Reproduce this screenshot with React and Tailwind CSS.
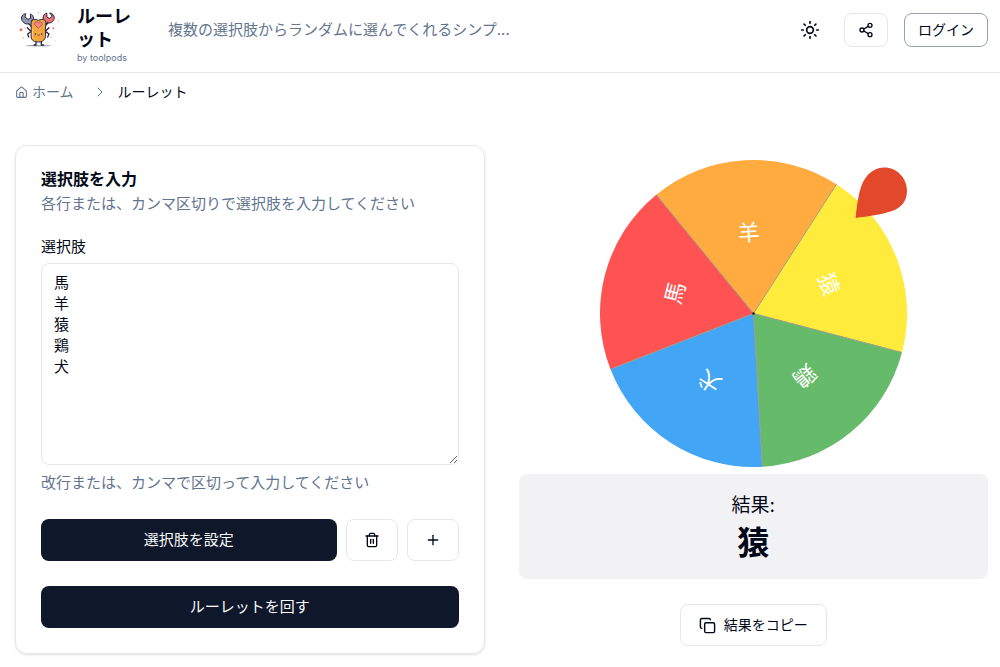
import { useState } from 'react'
import { ChevronRight, Copy, House, Plus, Share2, Sun, Trash2 } from 'lucide-react'

const SIZE = 307
const CENTER = SIZE / 2
const START_ANGLE = 248.7
const LABEL_RADIUS = 81
const COLORS = ['#ff5252', '#ffab40', '#ffeb3b', '#66bb6a', '#42a5f5']

function toItems(text) {
  return text.split(/[\n,、]/).map((s) => s.trim()).filter(Boolean)
}

// angles are in degrees, clockwise from 12 o'clock
function point(angle, radius) {
  const rad = (angle * Math.PI) / 180
  return [CENTER + radius * Math.sin(rad), CENTER - radius * Math.cos(rad)]
}

function Mascot() {
  return (
    <svg viewBox="0 0 180 150" className="mb-3 w-[60px] h-[50px] shrink-0" aria-hidden="true">
      <ellipse cx="85" cy="122" rx="38" ry="2.5" fill="#a9adbd" />
      <g stroke="#2b2944" strokeWidth="4" fill="none" strokeLinejoin="round" strokeLinecap="round">
        <path d="M78 106v14h-6M94 106v14h7" />
        <path d="M62 78l-10-10M62 80l-9 7 3 9M107 78l10-10M107 80l10 7-4 9" />
        <path d="M66 64l-8-8M104 62l8-8" strokeWidth="7" />
        <path d="M46 26c-9 1-14 11-10 20 4 9 14 13 21 10l11 13 9-9-9-12c5-8 2-19-7-21l1 13-8 3-8-6z" fill="#9299ae" strokeWidth="3" />
        <path d="M120 24c9 1 15 10 12 19-3 9-13 13-21 10l-10 13-10-8 10-12c-4-9 0-20 9-22l1 13 8 3 7-6z" fill="#ee7276" strokeWidth="3" />
        <path d="M66 46c6-5 12-3 19 0 7-3 15-5 21 1 4 8 0 17 0 25 0 12 2 20-1 28-4 9-12 11-20 11s-18-2-21-12c-2-7 0-17 0-26 0-9-3-19 2-27z" fill="#f3a63c" strokeWidth="3" />
      </g>
      <path d="M68 71c0 12-2 24 2 30" stroke="#ffc95c" strokeWidth="4" fill="none" />
      <path d="M85 70l-11-11c-3-7 4-12 11-6 7-6 14 0 11 6z" fill="#f58486" stroke="#98424f" strokeWidth="2" />
      <g fill="#35283d">
        <circle cx="76" cy="87" r="2.5" />
        <circle cx="95" cy="87" r="2.5" />
      </g>
      <path d="M82 89q4 5 8 0" stroke="#35283d" strokeWidth="2" fill="none" />
      <g fill="#ee7468">
        <circle cx="73" cy="93" r="2.5" />
        <circle cx="98" cy="93" r="2.5" />
        <circle cx="33" cy="74" r="4.5" />
        <circle cx="130" cy="70" r="3" />
      </g>
      <g fill="#f2bd74">
        <circle cx="85" cy="23" r="2.5" />
        <circle cx="145" cy="48" r="2.5" />
        <circle cx="40" cy="99" r="2.5" />
        <circle cx="124" cy="97" r="2.5" />
        <circle cx="45" cy="69" r="2" />
        <circle cx="137" cy="107" r="1.5" />
      </g>
    </svg>
  )
}

function Wheel({ items, turn }) {
  const step = 360 / items.length
  return (
    <svg viewBox={`0 0 ${SIZE} ${SIZE}`} className="w-[307px] max-w-full" role="img" aria-label="ルーレット">
      {items.map((item, i) => {
        const from = START_ANGLE + turn + i * step
        const [x1, y1] = point(from, CENTER)
        const [x2, y2] = point(from + step, CENTER)
        const mid = from + step / 2
        const [tx, ty] = point(mid, LABEL_RADIUS)
        return (
          <g key={i}>
            <path
              d={`M${CENTER} ${CENTER}L${x1} ${y1}A${CENTER} ${CENTER} 0 ${step > 180 ? 1 : 0} 1 ${x2} ${y2}Z`}
              fill={COLORS[i % COLORS.length]}
            />
            <text
              transform={`translate(${tx} ${ty}) rotate(${mid})`}
              textAnchor="middle"
              dominantBaseline="central"
              fill="#fff"
              className="text-[22px]"
            >
              {item}
            </text>
          </g>
        )
      })}
      {items.map((_, i) => {
        const [x, y] = point(START_ANGLE + turn + i * step, CENTER)
        return <path key={i} d={`M${CENTER} ${CENTER}L${x} ${y}`} stroke="#9c9c8c" strokeWidth="1" />
      })}
      <circle cx={CENTER} cy={CENTER} r="1.2" fill="#111" />
      <path
        d="M255.500 58C257 46 258 33 263 22C269 11 277 7.500 284 7.500C297 7.500 307 18 307 31C307 41 301 48 292 51C281 55 268 56 255.500 58Z"
        fill="#e2492b"
      />
    </svg>
  )
}

const outlineButton = 'flex items-center justify-center rounded-lg border border-gray-200 bg-white'
const primaryButton = 'h-[42px] rounded-lg bg-[#0f172a] text-[15px] text-slate-50'

export default function App() {
  const [text, setText] = useState('馬\n羊\n猿\n鶏\n犬')
  const [items, setItems] = useState(() => toItems(text))
  const [turn, setTurn] = useState(0)
  const [result, setResult] = useState('猿')

  function applyItems() {
    const next = toItems(text)
    if (next.length) setItems(next)
  }

  function spin() {
    const step = 360 / items.length
    const index = Math.floor(Math.random() * items.length)
    // the pointer sits at 45 degrees
    setTurn(45 - START_ANGLE - (index + 0.5) * step)
    setResult(items[index])
  }

  return (
    <div className="bg-white text-[15px] leading-[22px] text-[#020817] font-['Inter','Noto_Sans_CJK_JP',sans-serif]" lang="ja">
      <header className="flex h-[73px] items-center border-b border-gray-200 pl-[10px] pr-3">
        <a href="#" className="flex shrink-0 items-center gap-[7px]">
          <Mascot />
          <span className="block w-[60px] pb-[2px]">
            <span className="block text-[18px] font-bold leading-[23px]">ルーレット</span>
            <span className="block text-[9px] leading-[14px] text-slate-500">by toolpods</span>
          </span>
        </a>
        <p className="ml-[31px] mr-4 mb-3 text-slate-500">複数の選択肢からランダムに選んでくれるシンプ...</p>
        <div className="mb-3 ml-auto flex shrink-0 items-center gap-4">
          <button type="button" aria-label="テーマ切替" className="flex h-[34px] w-9 items-center justify-center">
            <Sun size={20} strokeWidth={2} />
          </button>
          <button type="button" aria-label="共有" className={`${outlineButton} h-[34px] w-11`}>
            <Share2 size={16} />
          </button>
          <button type="button" className="h-[34px] w-[84px] rounded-lg border border-gray-400 bg-white text-sm">
            ログイン
          </button>
        </div>
      </header>

      <nav aria-label="パンくず" className="flex items-center px-[15px] pt-2 text-sm leading-[22px]">
        <a href="#" className="flex items-center gap-1 text-slate-500">
          <House size={13} />
          ホーム
        </a>
        <ChevronRight size={16} strokeWidth={1.5} className="ml-[18px] mr-[10px] text-slate-500" />
        <span>ルーレット</span>
      </nav>

      <main className="grid grid-cols-2 gap-[34px] pb-3 pl-[15px] pr-3 pt-[42px]">
        <section className="flex flex-col rounded-xl border border-gray-200 p-[25px] shadow-sm">
          <h2 className="text-base font-bold leading-4">選択肢を入力</h2>
          <p className="mt-[6px] text-slate-500">各行または、カンマ区切りで選択肢を入力してください</p>

          <label htmlFor="choices" className="mt-[21px]">選択肢</label>
          <textarea
            id="choices"
            value={text}
            onChange={(e) => setText(e.target.value)}
            className="mt-[5px] h-[202px] w-full resize-y rounded-lg border border-gray-200 px-3 py-2 leading-[21px] outline-none"
          />
          <p className="mt-[7px] text-slate-500">改行または、カンマで区切って入力してください</p>

          <div className="mt-[25px] flex gap-[9px]">
            <button type="button" onClick={applyItems} className={`${primaryButton} flex-1`}>
              選択肢を設定
            </button>
            <button type="button" aria-label="クリア" onClick={() => setText('')} className={`${outlineButton} w-[52px]`}>
              <Trash2 size={16} />
            </button>
            <button type="button" aria-label="追加" onClick={() => setText(text + '\n')} className={`${outlineButton} w-[52px]`}>
              <Plus size={16} />
            </button>
          </div>
          <button type="button" onClick={spin} className={`${primaryButton} mt-[25px]`}>
            ルーレットを回す
          </button>
        </section>

        <section className="flex flex-col items-center pt-[15px]">
          <Wheel items={items} turn={turn} />
          <div className="mt-[7px] w-full rounded-lg bg-[#f2f2f4] pb-[13px] pt-[18px] text-center">
            <p className="text-[19px] leading-7">結果:</p>
            <p className="text-[32px] font-bold leading-[46px]">{result}</p>
          </div>
          <button
            type="button"
            onClick={() => navigator.clipboard?.writeText(result)}
            className={`${outlineButton} mt-[25px] h-[42px] gap-2 px-[18px] text-sm`}
          >
            <Copy size={17} />
            結果をコピー
          </button>
        </section>
      </main>
    </div>
  )
}
